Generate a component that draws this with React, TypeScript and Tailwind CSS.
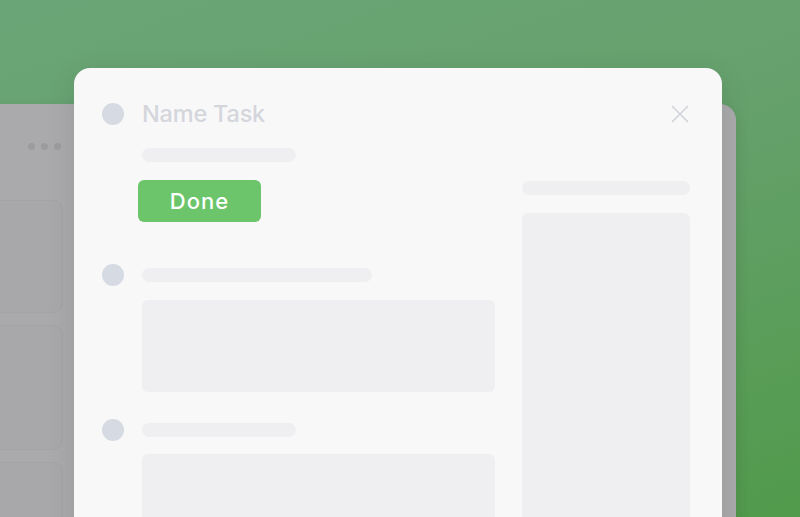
import { X } from "lucide-react"

const font = { fontFamily: "Inter, 'Noto Sans', sans-serif" }

function Dot() {
  return <div className="w-[22px] h-[22px] rounded-full bg-[#d6dae2] shrink-0" />
}

function Bar({ w }: { w: string }) {
  return <div className={`h-[14px] rounded-full bg-[#efeff1] ${w}`} />
}

export default function App() {
  return (
    <div
      className="relative w-[800px] h-[517px] overflow-hidden bg-[linear-gradient(160deg,#6aa577_0%,#66a16d_45%,#519a4b_100%)]"
      style={font}
    >
      {/* window behind */}
      <div className="absolute left-[-40px] top-[104px] w-[776px] h-[460px] rounded-[16px] bg-[#aaaaac] shadow-[0_4px_14px_rgba(0,0,0,0.08)]">
        <div className="flex gap-[6px] ml-[68px] mt-[39px]">
          <span className="w-[7px] h-[7px] rounded-full bg-[#9c9c9f]" />
          <span className="w-[7px] h-[7px] rounded-full bg-[#9c9c9f]" />
          <span className="w-[7px] h-[7px] rounded-full bg-[#9c9c9f]" />
        </div>
        <div className="flex flex-col gap-[12px] mt-[50px] w-[103px]">
          <div className="h-[113px] rounded-[10px] bg-[#a8a8aa] border border-[#a4a4a6]" />
          <div className="h-[125px] rounded-[10px] bg-[#a8a8aa] border border-[#a4a4a6]" />
          <div className="h-[110px] rounded-[10px] bg-[#a8a8aa] border border-[#a4a4a6]" />
        </div>
      </div>

      {/* modal */}
      <div className="absolute left-[74px] top-[68px] w-[648px] h-[480px] rounded-[16px] bg-[#f8f8f9] shadow-[0_8px_30px_rgba(0,0,0,0.1)] pt-[32px] pl-[28px] pr-[27px]">
        <div className="flex items-center h-[28px]">
          <Dot />
          <span className="ml-[18px] text-[23.5px] font-medium text-[#d4d6dc] leading-none tracking-[-0.2px]">Name Task</span>
          <X className="ml-auto text-[#d1d4d9]" size={30} strokeWidth={1.4} />
        </div>

        <div className="flex gap-[27px]">
          <div className="w-[393px] flex flex-col">
            <div className="ml-[40px] mt-[20px]">
              <Bar w="w-[154px]" />
            </div>
            <div className="ml-[36px] mt-[18px] w-[123px] h-[42px] rounded-[6px] bg-[#6cc56a] flex items-center justify-center text-white text-[22px] font-medium tracking-[1px]">
              Done
            </div>

            <div className="flex items-center gap-[18px] mt-[42px]">
              <Dot />
              <Bar w="w-[230px]" />
            </div>
            <div className="ml-[40px] mt-[14px] h-[92px] rounded-[6px] bg-[#efeff1]" />

            <div className="flex items-center gap-[18px] mt-[27px]">
              <Dot />
              <Bar w="w-[154px]" />
            </div>
            <div className="ml-[40px] mt-[13px] h-[120px] rounded-[6px] bg-[#efeff1]" />
          </div>

          <div className="w-[168px] flex flex-col pt-[53px] gap-[18px]">
            <Bar w="w-full" />
            <div className="h-[320px] rounded-[6px] bg-[#efeff1]" />
          </div>
        </div>
      </div>
    </div>
  )
}
